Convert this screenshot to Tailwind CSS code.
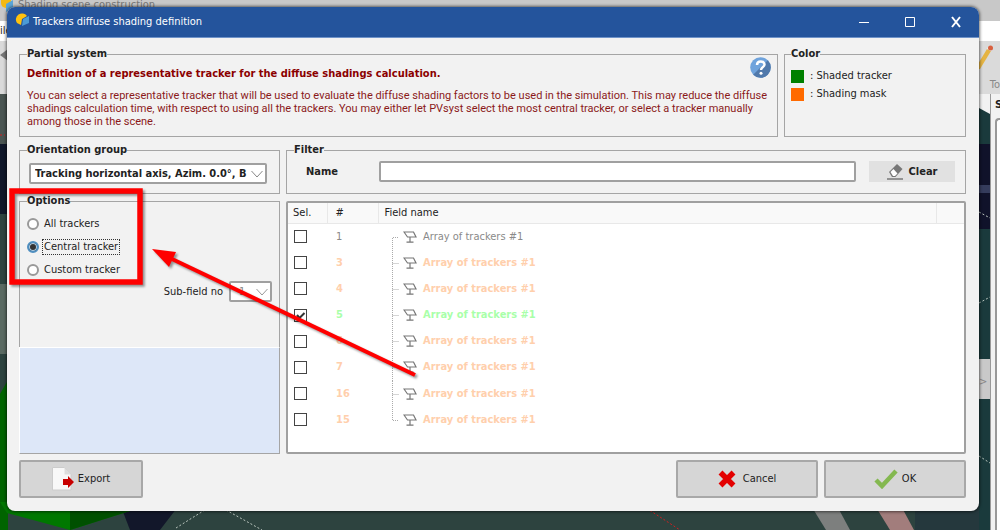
<!DOCTYPE html>
<html lang="en">
<head>
  <meta charset="UTF-8" />
  <meta name="viewport" content="width=device-width, initial-scale=1.0" />
  <title>Trackers diffuse shading definition</title>
  <script src="https://cdn.jsdelivr.net/npm/@tailwindcss/browser@4"></script>
</head>
<body class="relative flex h-screen flex-col overflow-hidden bg-[#2c3f3e] font-['DejaVu_Sans_Condensed','Noto_Sans',sans-serif] text-[11px] leading-[14px] text-[#222]">

  <!-- Main window behind the dialog -->
  <div class="flex h-[21px] items-start gap-0.5 bg-[#c8c8c8] text-[#777]">
    <svg class="h-3 w-4" viewBox="0 0 16 12"><path d="M1 0h10v8H6a5 5 0 0 1-5-5z" fill="#f5b912" /><path d="M6 4l7-4v9l-7 3z" fill="#5aa5d8" /></svg>
    <span class="-mt-0.5">Shading scene construction</span>
  </div>
  <div class="flex h-5 items-center bg-white"><span>ile</span></div>
  <div class="flex h-[53px] justify-between bg-[#dadada]">
    <svg class="mt-2 h-3 w-2" viewBox="0 0 8 12"><path d="M0 6l8-6v12z" fill="#777" /></svg>
    <div class="flex w-[22px] flex-col justify-between text-[#888]">
      <svg class="mt-1 h-7 w-4" viewBox="0 0 16 28"><path d="M0 19L9 4l4 2L2 24H0z" fill="#e5b443" /><path d="M9 4l1-2 4 2-1 2z" fill="#eee" /><circle cx="12.500" cy="3" r="2.500" fill="#d9603f" /></svg>
      <span class="mb-0.5 self-end">To</span>
    </div>
  </div>
  <div class="relative flex flex-1 justify-end">
    <svg class="absolute inset-0 h-full w-full" viewBox="0 0 1000 436" preserveAspectRatio="none">
      <rect width="1000" height="436" fill="#2d433f" />
      <path d="M0 0h8v90H0z" fill="#4a5552" />
      <path d="M0 50h8v70H0z" fill="#10182a" />
      <path d="M0 190h8v70H0z" fill="#5a6a62" />
      <path d="M120 410h60l-20 26h-30z" fill="#12172a" />
      <path d="M810 410h26l14 26h-24z" fill="#7d7f7e" />
      <path d="M874 410h26l14 26h-24z" fill="#a27d7c" />
      <path d="M915 410h85v26h-85z" fill="#25383d" />
      <path d="M979 0h11v436h-11z" fill="#1a3a3c" />
      <path d="M979 0h11v20l-11-6z" fill="#f2f2f2" />
      <path d="M979 50h11v85h-11z" fill="#10122a" />
      <path d="M979 91h11v8h-11z" fill="#353c5c" />
      <path d="M0 300l8-14v150H0z" fill="#006400" />
      <path d="M0 408h133v8l-63 20L7 419z" fill="#007800" />
      <path d="M70 412l63-2v6l-63 20z" fill="#005000" />
      <path d="M176 434l32-20M226 416l36 20M979 118l11 6M979 209l11-6M979 362l11 7" stroke="#b9c4bd" stroke-dasharray="2 2" fill="none" />
      <path d="M640 410l40 26M0 41h5" stroke="#d02020" stroke-dasharray="2 2" fill="none" />
    </svg>
    <div class="relative mt-[265px] h-10 w-[11px] bg-[#c9c9c9] pt-4 text-[#888]">&gt;</div>
    <div class="relative w-2.5 border-l border-[#999] bg-[#f2f2f2] pt-1">
      <div class="pl-1 font-bold">S</div>
      <div class="mt-1.5 ml-1 h-full rounded-tl-sm border-2 border-r-0 border-[#999] bg-white"></div>
    </div>
  </div>

  <!-- Dialog -->
  <main class="absolute top-[7px] right-[21px] left-[7px] rounded-lg bg-[#f2f2f2] shadow-[0_0_3px_1px_#0008]">
    <header class="flex h-[31px] items-center rounded-t-lg border-b border-[#6f93c9] bg-[#24549c] pl-2 text-white">
      <svg class="mb-1 h-4 w-4" viewBox="0 0 16 16"><path d="M2 11A6 6 0 1 1 12 4L7 7l-1 6z" fill="#ffc20e" /><path d="M8 7l6-3v7l-7 3z" fill="#4b9bd6" /></svg>
      <h1 class="ml-0.5 flex-1">Trackers diffuse shading definition</h1>
      <button aria-label="Minimize" class="grid h-full w-[46px] place-items-center"><svg class="h-3 w-3" viewBox="0 0 12 12"><path d="M1 6.500h10" stroke="#fff" /></svg></button>
      <button aria-label="Maximize" class="grid h-full w-[46px] place-items-center"><svg class="h-3 w-3" viewBox="0 0 12 12"><path d="M1.500 1.500h9v9h-9z" fill="none" stroke="#fff" /></svg></button>
      <button aria-label="Close" class="grid h-full w-[46px] place-items-center"><svg class="h-3 w-3" viewBox="0 0 12 12"><path d="M2 1l8 10M10 1L2 11" stroke="#fff" stroke-width="2" /></svg></button>
    </header>

    <div class="pt-[9px] pr-[13px] pb-[13px] pl-3">
      <div class="flex gap-1.5">
        <fieldset class="relative min-w-0 flex-1 border border-[#a5a5a5] px-[7px] pt-1.5 pb-2 text-[#8b1a1a]">
          <legend class="font-bold text-[#222]">Partial system</legend>
          <h2 class="font-bold text-[#8b0000]">Definition of a representative tracker for the diffuse shadings calculation.</h2>
          <p class="mt-2 font-[Roboto,sans-serif] leading-[13px]">
            You can select a representative tracker that will be used to evaluate the diffuse shading factors to be used in the simulation. This may reduce the diffuse<br />
            shadings calculation time, with respect to using all the trackers. You may either let PVsyst select the most central tracker, or select a tracker manually<br />
            among those in the scene.
          </p>
          <button aria-label="Help" class="absolute -top-1 right-1.5 h-[21px] w-[21px]">
            <svg viewBox="0 0 21 21"><circle cx="10.500" cy="10.500" r="10.300" fill="#6fa3dc" /><path d="M17.800 3.200A10.300 10.300 0 0 1 3.200 17.800z" fill="#5079ab" /><path d="M7 8c0-5 7.500-4.500 7.500-.5 0 2.500-3.500 2.500-3.500 5.500" fill="none" stroke="#fff" stroke-width="2.500" /><circle cx="11" cy="16.300" r="1.500" fill="#fff" /></svg>
          </button>
        </fieldset>
        <fieldset class="w-[182px] border border-[#a5a5a5] px-1.5">
          <legend class="font-bold">Color</legend>
          <div class="mt-1.5 flex h-[18px] items-center gap-1.5"><span class="h-[13px] w-[13px] bg-[#008000]"></span>: Shaded tracker</div>
          <div class="flex h-[18px] items-center gap-1.5"><span class="h-[13px] w-[13px] bg-[#ff6a00]"></span>: Shading mask</div>
        </fieldset>
      </div>

      <div class="mt-1.5 flex gap-1.5">
        <fieldset class="w-[261px] border border-[#a5a5a5] pt-1.5 pr-3 pb-[9px] pl-[9px]">
          <legend class="-ml-0.5 font-bold">Orientation group</legend>
          <div class="relative">
            <select aria-label="Orientation group" class="block h-[21px] w-full appearance-none rounded-xs border-2 border-[#a0a0a0] bg-white pr-4 pl-1 font-bold"><option>Tracking horizontal axis, Azim. 0.0°, B</option></select>
            <svg class="pointer-events-none absolute top-[7px] right-1 h-2 w-3" viewBox="0 0 12 8"><path d="M.5 1L6 7l5.500-6" fill="none" stroke="#888" /></svg>
          </div>
        </fieldset>
        <fieldset class="min-w-0 flex-1 border border-[#a5a5a5] px-[7px]">
          <legend class="font-bold">Filter</legend>
          <div class="flex items-center pt-1 pr-[3px] pl-3">
            <label for="name" class="w-[73px] font-bold">Name</label>
            <input id="name" type="text" class="h-[21px] min-w-0 flex-1 rounded-xs border-2 border-[#a0a0a0] bg-white px-1" />
            <button class="ml-[13px] flex h-[21px] w-[86px] items-center justify-center gap-1.5 bg-[#e1e1e1] font-bold">
              <svg class="h-[17px] w-4" viewBox="0 0 16 17"><path d="M2 9l8-8 5.500 5-7 8H5z" fill="#777" /><path d="M3.500 9L6.500 6l4 4.500L8 13H6z" fill="#fff" /><path d="M0 16h16" stroke="#777" stroke-width="1.500" /></svg>
              Clear
            </button>
          </div>
        </fieldset>
      </div>

      <div class="flex gap-1.5">
        <div class="flex w-[261px] flex-col">
          <fieldset class="h-[153px] border border-b-0 border-[#a5a5a5] px-[7px] pt-1">
            <legend class="font-bold">Options</legend>
            <label class="flex h-[23px] items-center gap-1"><input type="radio" name="tracker" class="h-3 w-3 appearance-none rounded-full border-2 border-[#999] bg-white" /><span class="px-px">All trackers</span></label>
            <label class="flex h-[23px] items-center gap-1"><input type="radio" name="tracker" checked class="h-3 w-3 appearance-none rounded-full border-2 border-[#4f8fc0] bg-[#333] ring-1 ring-[#b5d3ea] ring-inset" /><span class="-ml-px border border-dotted border-[#333] px-px">Central tracker</span></label>
            <label class="flex h-[23px] items-center gap-1"><input type="radio" name="tracker" class="h-3 w-3 appearance-none rounded-full border-2 border-[#999] bg-white" /><span class="px-px">Custom tracker</span></label>
            <div class="flex items-center justify-end gap-1.5">
              <label for="subfield">Sub-field no</label>
              <div class="relative">
                <select id="subfield" class="block h-[21px] w-[43px] appearance-none rounded-xs border-2 border-[#a0a0a0] bg-white pl-2 text-[#888]"><option>1</option></select>
                <svg class="pointer-events-none absolute top-[7px] right-1 h-2 w-3" viewBox="0 0 12 8"><path d="M.5 1L6 7l5.500-6" fill="none" stroke="#999" /></svg>
              </div>
            </div>
          </fieldset>
          <div class="flex-1 border border-t-white border-r-[#a5a5a5] border-b-[#a5a5a5] border-l-white bg-[#dde7f8]"></div>
        </div>

        <div class="mt-[7px] h-[253px] min-w-0 flex-1 rounded-xs border-2 border-[#a0a0a0] bg-white">
          <table class="h-[230px] w-full table-fixed border-collapse text-left">
            <thead class="h-5 bg-[#f9f9f9]">
              <tr class="h-5 border-b border-[#e8e8e8]">
                <th class="w-[39px] border-r border-[#e8e8e8] pl-[5px] font-normal">Sel.</th>
                <th class="w-[51px] border-r border-[#e8e8e8] pl-2 font-normal">#</th>
                <th class="border-r border-[#e8e8e8] pl-1.5 font-normal">Field name</th>
                <th class="w-7"></th>
              </tr>
            </thead>
            <tbody id="trackers"></tbody>
          </table>
        </div>
      </div>

      <div class="mt-1.5 flex gap-1.5">
        <button class="mr-auto flex h-[38px] w-[124px] items-center justify-center gap-1 rounded-xs border-2 border-[#a8a8a8] bg-[#d6d6d6]">
          <svg class="h-6 w-[22px]" viewBox="0 0 22 24"><path d="M.5.500h12l6.500 7v15.500H.5z" fill="#f8f8f8" stroke="#ccc" /><path d="M12.500.500v7H19z" fill="#ddd" /><path d="M11 12h5V9l6 6-6 6v-3h-5z" fill="#c80000" /></svg>
          Export
        </button>
        <button class="flex h-[38px] w-[142px] items-center justify-center gap-[7px] rounded-xs border-2 border-[#a8a8a8] bg-[#d6d6d6]">
          <svg class="h-[18px] w-[18px]" viewBox="0 0 18 18"><path d="M2.500 2.500l13 13M15.500 2.500l-13 13" stroke="#e30000" stroke-width="5.500" /></svg>
          Cancel
        </button>
        <button class="flex h-[38px] w-[142px] items-center justify-center gap-1 rounded-xs border-2 border-[#a8a8a8] bg-[#d6d6d6]">
          <svg class="h-5 w-6" viewBox="0 0 24 20"><path d="M2 11l6 6L22 2" fill="none" stroke="#84b850" stroke-width="4.500" /></svg>
          OK
        </button>
      </div>
    </div>
  </main>

  <!-- Red annotation -->
  <svg class="pointer-events-none absolute top-0 left-0 h-[530px] w-[1000px] drop-shadow-[2px_2px_1px_#0006]" viewBox="0 0 1000 530">
    <rect x="12" y="191" width="128" height="91" fill="none" stroke="#f00" stroke-width="5.500" />
    <path d="M172 259L415 375" stroke="#f00" stroke-width="4" />
    <path d="M152 249l24 3-7 15z" fill="#f00" />
  </svg>

  <script>
    const trackers = [
      { no: 1, color: "text-[#8a8a8a]" },
      { no: 3, color: "font-bold text-[#ffcfac]" },
      { no: 4, color: "font-bold text-[#ffcfac]" },
      { no: 5, color: "font-bold text-[#a9ffa9]", checked: true },
      { no: 6, color: "font-bold text-[#ffcfac]" },
      { no: 7, color: "font-bold text-[#ffcfac]" },
      { no: 16, color: "font-bold text-[#ffcfac]" },
      { no: 15, color: "font-bold text-[#ffcfac]" },
    ];

    // Branch line starts at the first row and stops at the last one
    function branchPath(i) {
      if (i === 0) return "M.5 27V13.500H7";
      if (i === trackers.length - 1) return "M.5 0V13.500H7";
      return "M.5 0V27M.5 13.500H7";
    }

    document.getElementById("trackers").innerHTML = trackers.map((t, i) => `
      <tr class="${t.color}">
        <td class="pl-1.5">
          <span class="relative block h-[13px] w-[13px]">
            <input type="checkbox" aria-label="Select tracker ${t.no}" ${t.checked ? "checked" : ""} class="peer block h-[13px] w-[13px] appearance-none border border-[#444] bg-white" />
            <svg class="pointer-events-none absolute inset-0 hidden peer-checked:block" viewBox="0 0 13 13"><path d="M3 6l2.500 3L10.500 4" fill="none" stroke="#333" stroke-width="2" /></svg>
          </span>
        </td>
        <td class="pl-[9px]">${t.no}</td>
        <td class="pl-3.5">
          <div class="flex items-center">
            <svg class="h-[26px] w-2 overflow-visible" viewBox="0 0 8 26"><path d="${branchPath(i)}" fill="none" stroke="#aaa" stroke-dasharray="1 1" /></svg>
            <svg class="mr-1.5 ml-[3px] h-3 w-3.5" viewBox="0 0 14 12"><path d="M1 1h9.500l2.500 5H4.500zM7 6v5M3.500 11.200h7" fill="none" stroke="#777" stroke-width="1.200" /></svg>
            Array of trackers #1
          </div>
        </td>
        <td></td>
      </tr>`).join("");
  </script>
</body>
</html>
